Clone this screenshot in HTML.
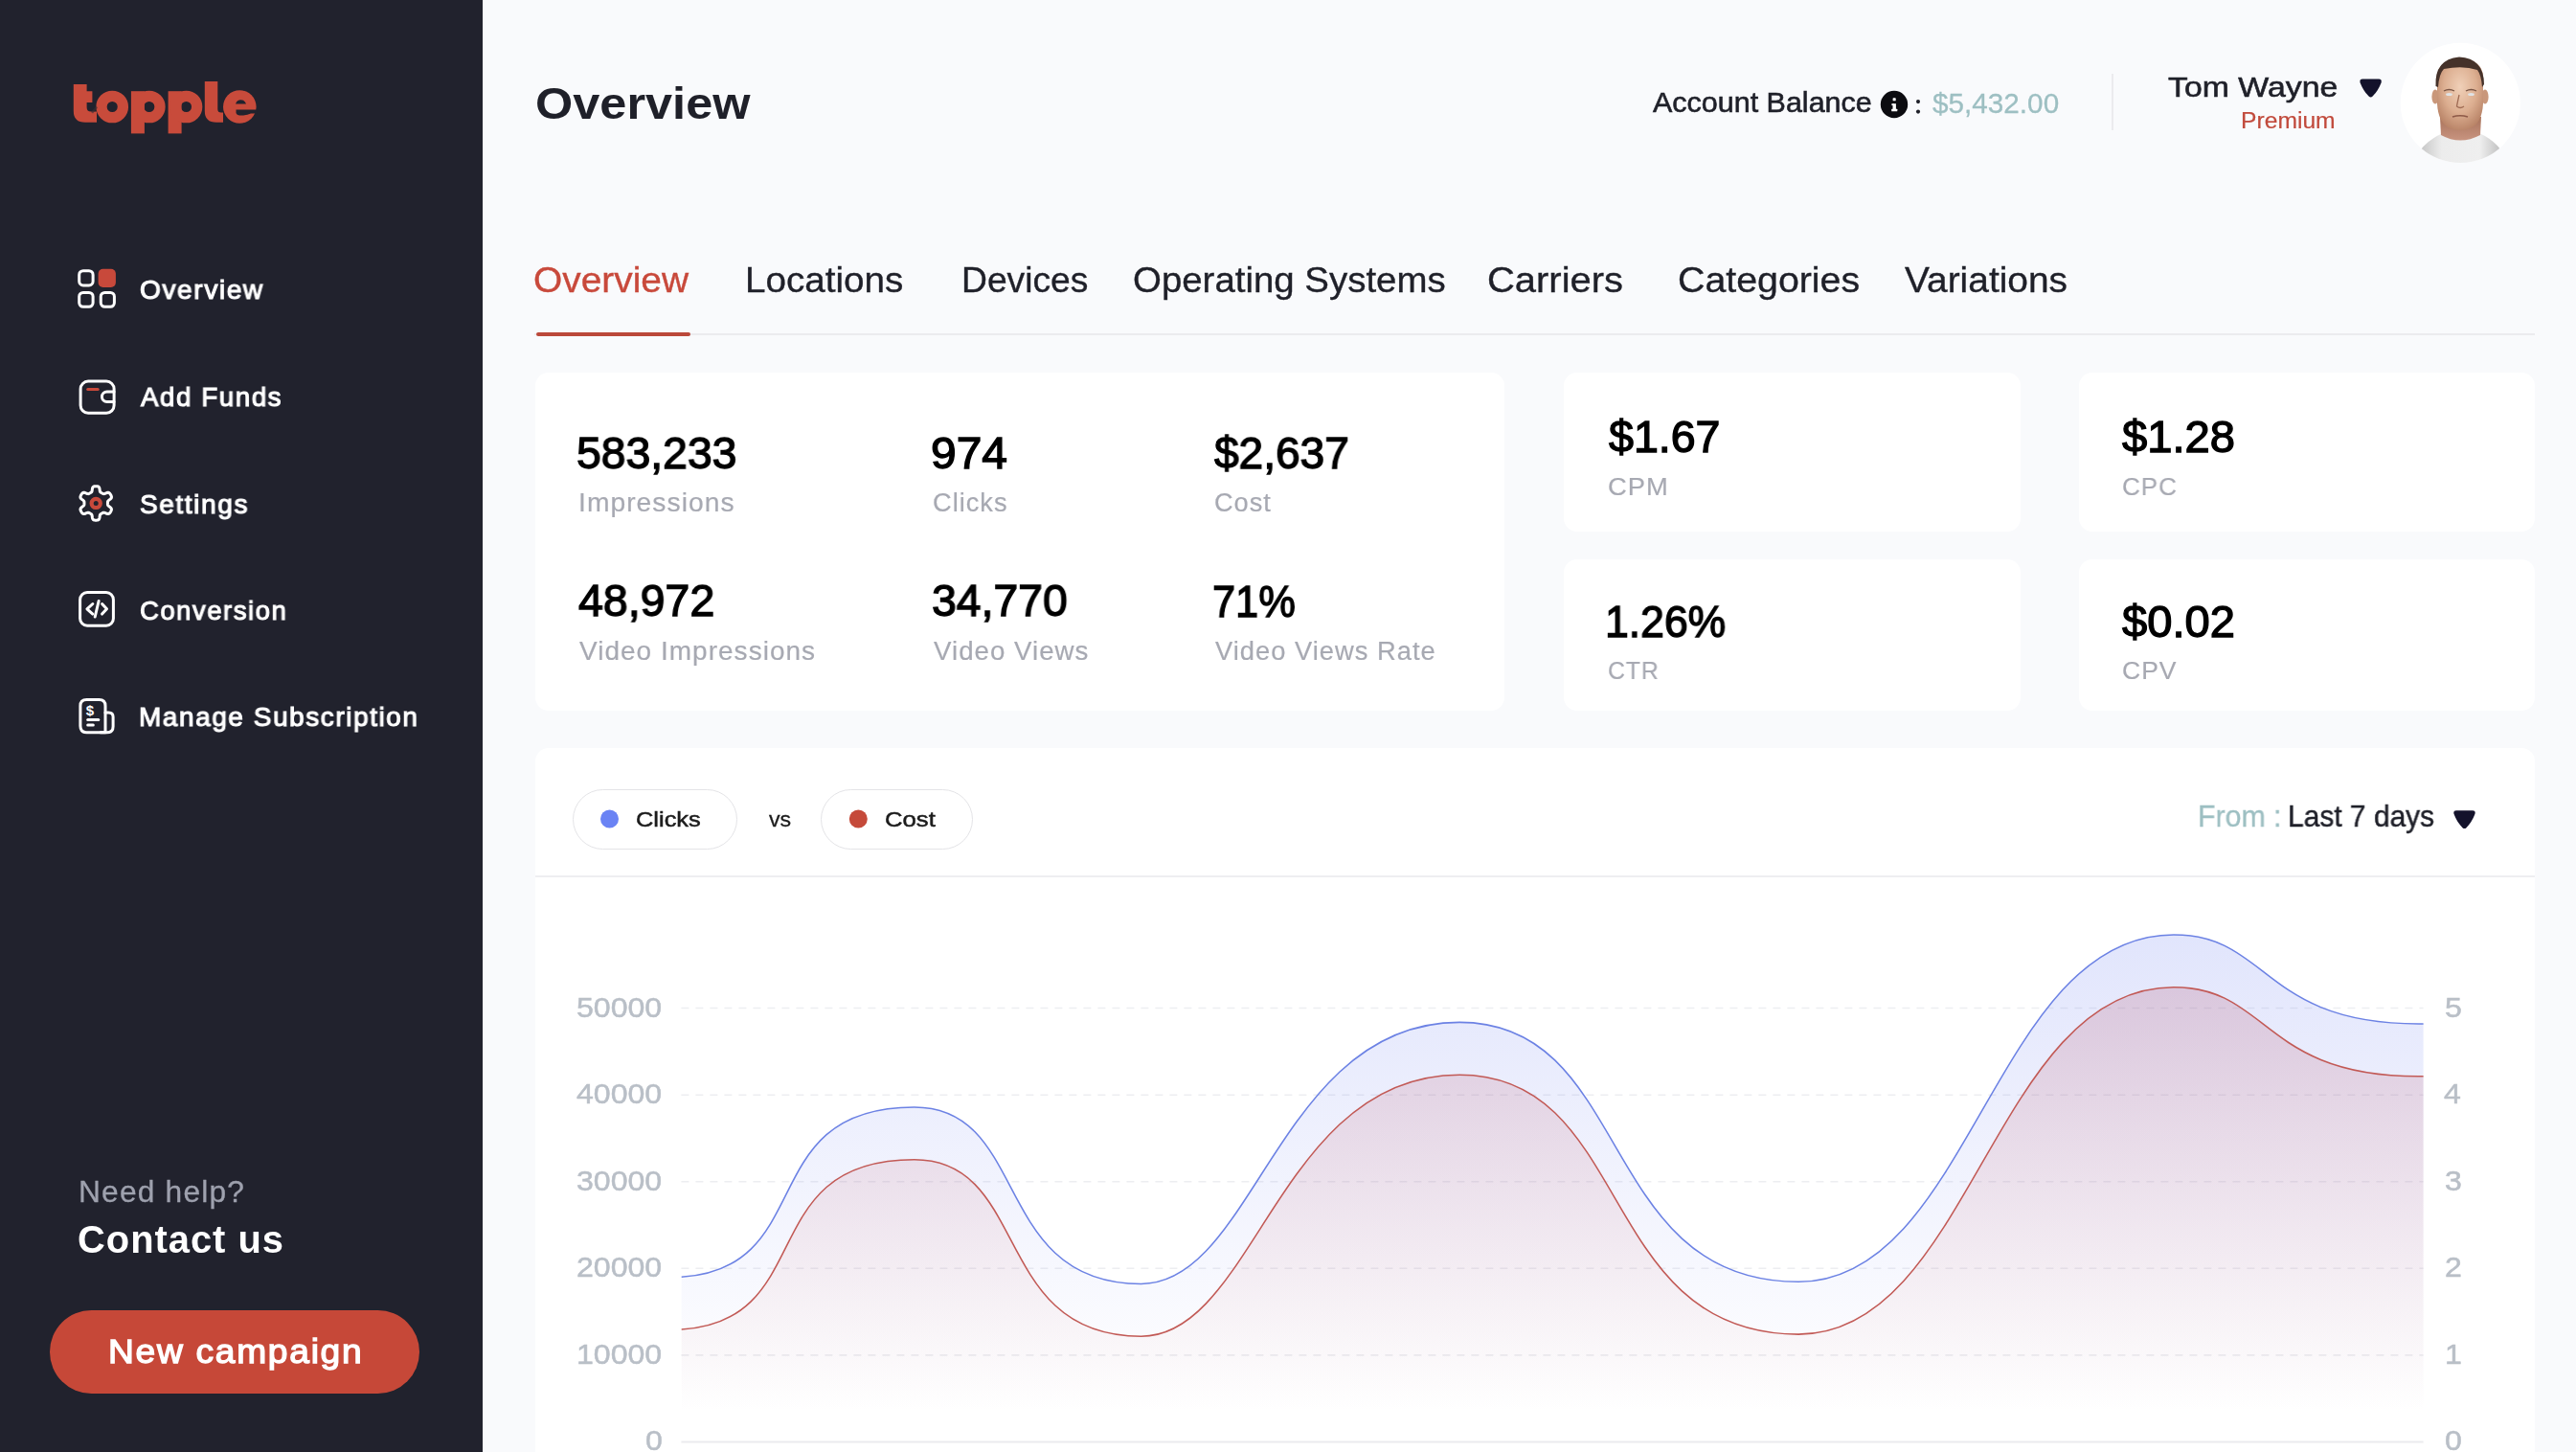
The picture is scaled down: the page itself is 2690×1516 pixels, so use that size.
<!DOCTYPE html>
<html><head><meta charset="utf-8"><title>topple - Overview</title>
<style>
html,body{margin:0;padding:0;}
body{width:2690px;height:1516px;overflow:hidden;position:relative;background:#f9fafc;font-family:"Liberation Sans",sans-serif;}
.t{position:absolute;white-space:pre;transform-origin:0 0;will-change:transform;font-family:"Liberation Sans",sans-serif;}
.box{position:absolute;}
#side{position:absolute;left:0;top:0;width:504px;height:1516px;background:#21222d;}
.card{position:absolute;background:#ffffff;border-radius:14px;}
.pill{position:absolute;background:#fff;border:1.5px solid #e4e4e7;border-radius:32px;box-sizing:border-box;}
svg{position:absolute;left:0;top:0;overflow:visible;}
</style></head>
<body>
<div id="side"></div>
<div class="box" style="left:51.6px;top:1367.5px;width:386.7px;height:87px;border-radius:44px;background:#c64838;"></div>

<!-- cards -->
<div class="card" style="left:558.5px;top:389px;width:1012.5px;height:353px;"></div>
<div class="card" style="left:1633px;top:389px;width:477px;height:166px;"></div>
<div class="card" style="left:2171px;top:389px;width:476px;height:166px;"></div>
<div class="card" style="left:1633px;top:584px;width:477px;height:158px;"></div>
<div class="card" style="left:2171px;top:584px;width:476px;height:158px;"></div>
<div class="card" style="left:558.6px;top:780.5px;width:2088.2px;height:800px;"></div>

<!-- tabs line -->
<div class="box" style="left:558px;top:348px;width:2089px;height:2px;background:#ebebee;"></div>
<div class="box" style="left:559.5px;top:347px;width:161.5px;height:4.4px;border-radius:3px;background:#bb483a;"></div>

<!-- header divider -->
<div class="box" style="left:2205px;top:77px;width:2px;height:59px;background:#ebebee;"></div>

<!-- pills -->
<div class="pill" style="left:597.6px;top:824px;width:172.8px;height:62.5px;"></div>
<div class="pill" style="left:857.4px;top:824px;width:159.1px;height:62.5px;"></div>
<!-- chart separator -->
<div class="box" style="left:558.6px;top:914px;width:2088.2px;height:2px;background:#eeeef1;"></div>

<svg width="2690" height="1516" viewBox="0 0 2690 1516">
  <defs>
    <linearGradient id="gb" x1="0" y1="975" x2="0" y2="1475" gradientUnits="userSpaceOnUse">
      <stop offset="0" stop-color="#6276f0" stop-opacity="0.19"/>
      <stop offset="0.45" stop-color="#6276f0" stop-opacity="0.10"/>
      <stop offset="0.8" stop-color="#6276f0" stop-opacity="0.035"/>
      <stop offset="1" stop-color="#6276f0" stop-opacity="0"/>
    </linearGradient>
    <linearGradient id="gr" x1="0" y1="1030" x2="0" y2="1475" gradientUnits="userSpaceOnUse">
      <stop offset="0" stop-color="#b04a66" stop-opacity="0.21"/>
      <stop offset="0.55" stop-color="#c4505c" stop-opacity="0.09"/>
      <stop offset="0.85" stop-color="#d05a50" stop-opacity="0.03"/>
      <stop offset="1" stop-color="#d05a50" stop-opacity="0"/>
    </linearGradient>
  </defs>

  <!-- logo -->
  <g fill="#c84b3b">
    <path d="M76.8,88 H90.6 V95.2 H96.4 V107 H90.6 V112 Q90.6,116.5 95,116.5 H101 V127.8 H89 Q76.8,127.8 76.8,116 Z"/>
    <circle cx="117.2" cy="111.5" r="11.2" fill="none" stroke="#c84b3b" stroke-width="11.3"/>
    <rect x="136.9" y="95.2" width="14" height="44.2"/>
    <circle cx="155.8" cy="111.5" r="11.2" fill="none" stroke="#c84b3b" stroke-width="11.3"/>
    <rect x="175.6" y="95.2" width="14" height="44.2"/>
    <circle cx="194.5" cy="111.5" r="11.2" fill="none" stroke="#c84b3b" stroke-width="11.3"/>
    <path d="M213.8,84.9 H227.3 V114 Q227.3,117.5 231,117.5 H233 V127.8 H226 Q213.8,127.8 213.8,116 Z"/>
    <circle cx="250.3" cy="111.5" r="17.3"/>
  </g>
  <g fill="#21222d">
    <path d="M246,108.4 Q247.5,104.2 251.5,104.2 Q255.5,104.2 257,108.4 Z"/>
    <path d="M246.5,114.6 H268.5 V118.6 H262 Q258,120.6 252,120.6 Q247.5,120.6 246.5,118 Z"/>
    <path d="M95,117 L100.5,110.5 L102,112.5 L97,118.5 Z" fill="#3a3033" opacity="0.6"/>
  </g>

  <!-- nav icons -->
  <g fill="none" stroke="#ffffff" stroke-width="3" stroke-linecap="round" stroke-linejoin="round">
    <rect x="82.7" y="282.7" width="14.4" height="15.3" rx="4.2"/>
    <rect x="82.7" y="305.4" width="14.4" height="14.9" rx="4.2"/>
    <rect x="105.25" y="305.4" width="14.15" height="14.9" rx="4.2"/>
    <rect x="84.1" y="398.1" width="35" height="33.1" rx="8"/>
    <path d="M119,409 H111.7 A5.25,5.25 0 0 0 111.7,419.5 H119"/>
    <path d="M112.45,525.40 112.45,524.97 112.45,524.54 112.47,524.11 112.54,523.67 112.75,523.19 113.24,522.63 114.14,521.93 115.23,521.09 116.05,520.25 116.42,519.50 116.46,518.83 116.34,518.22 116.13,517.63 115.87,517.07 115.57,516.52 115.25,516.00 114.89,515.49 114.49,515.02 114.02,514.60 113.42,514.31 112.59,514.25 111.45,514.54 110.18,515.07 109.12,515.49 108.39,515.64 107.87,515.58 107.45,515.42 107.07,515.22 106.70,515.01 106.33,514.79 105.95,514.58 105.58,514.36 105.22,514.13 104.87,513.84 104.56,513.42 104.32,512.72 104.16,511.59 103.98,510.23 103.67,509.10 103.20,508.41 102.64,508.03 102.05,507.83 101.44,507.72 100.82,507.67 100.20,507.65 99.58,507.67 98.96,507.72 98.35,507.83 97.76,508.03 97.20,508.41 96.73,509.10 96.42,510.23 96.24,511.59 96.08,512.72 95.84,513.42 95.53,513.84 95.18,514.13 94.82,514.36 94.45,514.58 94.08,514.79 93.70,515.01 93.33,515.22 92.95,515.42 92.53,515.58 92.01,515.64 91.28,515.49 90.22,515.07 88.95,514.54 87.81,514.25 86.98,514.31 86.38,514.60 85.91,515.02 85.51,515.49 85.15,516.00 84.83,516.52 84.53,517.07 84.27,517.63 84.06,518.22 83.94,518.83 83.98,519.50 84.35,520.25 85.17,521.09 86.26,521.93 87.16,522.63 87.65,523.19 87.86,523.67 87.93,524.11 87.95,524.54 87.95,524.97 87.95,525.40 87.95,525.83 87.95,526.26 87.93,526.69 87.86,527.13 87.65,527.61 87.16,528.17 86.26,528.87 85.17,529.71 84.35,530.55 83.98,531.30 83.94,531.97 84.06,532.58 84.27,533.17 84.53,533.73 84.83,534.27 85.15,534.80 85.51,535.31 85.91,535.78 86.38,536.20 86.98,536.49 87.81,536.55 88.95,536.26 90.22,535.73 91.28,535.31 92.01,535.16 92.53,535.22 92.95,535.38 93.33,535.58 93.70,535.79 94.08,536.01 94.45,536.22 94.82,536.44 95.18,536.67 95.53,536.96 95.84,537.38 96.08,538.08 96.24,539.21 96.42,540.57 96.73,541.70 97.20,542.39 97.76,542.77 98.35,542.97 98.96,543.08 99.58,543.13 100.20,543.15 100.82,543.13 101.44,543.08 102.05,542.97 102.64,542.77 103.20,542.39 103.67,541.70 103.98,540.57 104.16,539.21 104.32,538.08 104.56,537.38 104.87,536.96 105.22,536.67 105.58,536.44 105.95,536.22 106.33,536.01 106.70,535.79 107.07,535.58 107.45,535.38 107.87,535.22 108.39,535.16 109.12,535.31 110.18,535.73 111.45,536.26 112.59,536.55 113.42,536.49 114.02,536.20 114.49,535.78 114.89,535.31 115.25,534.80 115.57,534.27 115.87,533.73 116.13,533.17 116.34,532.58 116.46,531.97 116.42,531.30 116.05,530.55 115.23,529.71 114.14,528.87 113.24,528.17 112.75,527.61 112.54,527.13 112.47,526.69 112.45,526.26 112.45,525.83 112.45,525.40Z"/>
    <rect x="83.6" y="618.6" width="34.8" height="34.6" rx="7.5"/>
    <polyline points="96.8,630.5 90.9,635.8 96.8,641.1"/>
    <line x1="103.1" y1="627.5" x2="99.2" y2="644"/>
    <polyline points="106.6,630.5 111.5,635.8 106.6,641.1"/>
    <path d="M90.5,730.5 H103.5 Q110,730.5 110,737 V764.7 H90.5 Q83.9,764.7 83.9,758 V737 Q83.9,730.5 90.5,730.5 Z"/>
    <path d="M110,744 H113.5 Q118.1,744 118.1,748.5 V758.5 Q118.1,764.7 111.8,764.7 H105"/>
    <line x1="91.7" y1="751.4" x2="102.8" y2="751.4"/>
    <line x1="91.7" y1="757" x2="97.3" y2="757"/>
  </g>
  <rect x="102.6" y="280.7" width="18.3" height="19.2" rx="5" fill="#c8493b"/>
  <line x1="91.7" y1="406.5" x2="102.2" y2="406.5" stroke="#c8493b" stroke-width="3" stroke-linecap="round"/>
  <circle cx="100.2" cy="525.4" r="4.6" fill="none" stroke="#c8493b" stroke-width="4.2"/>
  <text x="94" y="747" font-family="Liberation Sans" font-weight="700" font-size="15" fill="#fff" text-anchor="middle">$</text>

  <!-- info icon -->
  <circle cx="1978" cy="109" r="14.2" fill="#0c0c10"/>
  <g fill="#ffffff">
    <rect x="1976.6" y="102.3" width="3.1" height="3" rx="0.6"/>
    <rect x="1976.5" y="108.2" width="3.4" height="6.2"/>
    <rect x="1975.2" y="113.8" width="6.1" height="2.5" rx="0.5"/>
    <rect x="1975.4" y="108.2" width="2.4" height="1.9"/>
  </g>
  <circle cx="2003" cy="106.1" r="2.05" fill="#1f2029"/>
  <circle cx="2003" cy="116.6" r="2.05" fill="#1f2029"/>

  <!-- dropdown triangles -->
  <path id="tri" d="M2467.2,82.6 H2484 Q2487.6,82.6 2486.6,86.2 Q2483.6,94.5 2477.6,100.6 Q2475.6,102.4 2473.6,100.6 Q2467.6,94.5 2464.6,86.2 Q2463.6,82.6 2467.2,82.6 Z" fill="#13122b"/>
  <path d="M2467.2,82.6 H2484 Q2487.6,82.6 2486.6,86.2 Q2483.6,94.5 2477.6,100.6 Q2475.6,102.4 2473.6,100.6 Q2467.6,94.5 2464.6,86.2 Q2463.6,82.6 2467.2,82.6 Z" fill="#13122b" transform="translate(97.9,763.6)"/>

  <!-- avatar -->
  <defs><clipPath id="av"><circle cx="2569.3" cy="107.4" r="62.6"/></clipPath>
    <radialGradient id="skin" cx="0.5" cy="0.4" r="0.65"><stop offset="0" stop-color="#f0d0b8"/><stop offset="0.55" stop-color="#dcae90"/><stop offset="1" stop-color="#b47e62"/></radialGradient>
    <linearGradient id="shirt" x1="0" y1="0" x2="1" y2="0"><stop offset="0" stop-color="#b9b9b9"/><stop offset="0.3" stop-color="#ececec"/><stop offset="0.7" stop-color="#efefef"/><stop offset="1" stop-color="#b0b0b0"/></linearGradient>
    <linearGradient id="neck" x1="0" y1="0" x2="0" y2="1"><stop offset="0" stop-color="#a8725a"/><stop offset="1" stop-color="#c89480"/></linearGradient>
  </defs>
  <circle cx="2569.3" cy="107.4" r="62.6" fill="#ffffff"/>
  <g clip-path="url(#av)">
    <path d="M2520,172 Q2526,150 2551,139 Q2569,149 2589,139 Q2613,150 2619,172 Z" fill="url(#shirt)"/>
    <path d="M2548,122 L2549,141 Q2569,152 2590,141 L2591,122 Z" fill="url(#neck)"/>
    <ellipse cx="2543" cy="101" rx="3.6" ry="7.5" fill="#c9977a"/>
    <ellipse cx="2595" cy="101" rx="3.6" ry="7.5" fill="#c9977a"/>
    <path d="M2545,80 Q2546,62 2569,61 Q2592,62 2593,80 L2593,108 Q2592,128 2580,134 Q2569,138 2558,134 Q2546,128 2545,108 Z" fill="url(#skin)"/>
    <path d="M2543.5,90 Q2542,62 2568,59.5 Q2594,61 2594,88 L2592,91 Q2591,78 2587,73 Q2572,68 2552,72 Q2547,77 2546,91 Z" fill="#45322a"/>
    <path d="M2552,95 Q2557.5,92 2563,95" stroke="#7a5646" stroke-width="1.4" fill="none"/>
    <path d="M2575,95 Q2580.5,92 2586,95" stroke="#7a5646" stroke-width="1.4" fill="none"/>
    <ellipse cx="2557.5" cy="98.6" rx="3.4" ry="1.5" fill="#dfe3e6"/>
    <ellipse cx="2580.5" cy="98.6" rx="3.4" ry="1.5" fill="#dfe3e6"/>
    <path d="M2568,99 Q2566,108 2565.5,111 Q2569,114 2573,111" stroke="#a06c54" stroke-width="1.3" fill="none"/>
    <path d="M2561,122 Q2569,119.5 2577,122" stroke="#8e5a48" stroke-width="1.6" fill="none"/>
  </g>

  <!-- chart grid -->
  <g stroke="#edeef1" stroke-width="1.6" stroke-dasharray="8 7">
    <line x1="711.4" y1="1052.5" x2="2530.6" y2="1052.5"/>
    <line x1="711.4" y1="1143.2" x2="2530.6" y2="1143.2"/>
    <line x1="711.4" y1="1233.8" x2="2530.6" y2="1233.8"/>
    <line x1="711.4" y1="1324.3" x2="2530.6" y2="1324.3"/>
    <line x1="711.4" y1="1414.9" x2="2530.6" y2="1414.9"/>
  </g>
  <line x1="711.4" y1="1505.6" x2="2530.6" y2="1505.6" stroke="#ebebee" stroke-width="2"/>
  <path d="M711.70,1333.26 C855.37,1324.07 786.12,1155.94 954.76,1155.94 C1075.95,1155.94 1035.17,1340.44 1191.56,1340.44 C1310.06,1340.44 1335.53,1067.36 1524.18,1067.36 C1705.77,1067.36 1667.54,1338.30 1878.04,1338.30 C2058.03,1338.30 2082.36,975.92 2269.90,975.92 C2370.70,975.92 2361.82,1070.81 2530.60,1068.93 L2530.6,1505.4 L711.7,1505.4 Z" fill="url(#gb)"/>
  <path d="M711.70,1388.06 C855.37,1378.87 786.12,1210.74 954.76,1210.74 C1075.95,1210.74 1035.17,1395.24 1191.56,1395.24 C1310.06,1395.24 1335.53,1122.16 1524.18,1122.16 C1705.77,1122.16 1667.54,1393.10 1878.04,1393.10 C2058.03,1393.10 2082.36,1030.72 2269.90,1030.72 C2370.70,1030.72 2361.82,1125.61 2530.60,1123.73 L2530.6,1505.4 L711.7,1505.4 Z" fill="url(#gr)"/>
  <path d="M711.70,1333.26 C855.37,1324.07 786.12,1155.94 954.76,1155.94 C1075.95,1155.94 1035.17,1340.44 1191.56,1340.44 C1310.06,1340.44 1335.53,1067.36 1524.18,1067.36 C1705.77,1067.36 1667.54,1338.30 1878.04,1338.30 C2058.03,1338.30 2082.36,975.92 2269.90,975.92 C2370.70,975.92 2361.82,1070.81 2530.60,1068.93" fill="none" stroke="#6c82e4" stroke-width="1.55"/>
  <path d="M711.70,1388.06 C855.37,1378.87 786.12,1210.74 954.76,1210.74 C1075.95,1210.74 1035.17,1395.24 1191.56,1395.24 C1310.06,1395.24 1335.53,1122.16 1524.18,1122.16 C1705.77,1122.16 1667.54,1393.10 1878.04,1393.10 C2058.03,1393.10 2082.36,1030.72 2269.90,1030.72 C2370.70,1030.72 2361.82,1125.61 2530.60,1123.73" fill="none" stroke="#c25a56" stroke-width="1.55"/>

  <!-- legend dots -->
  <circle cx="636.5" cy="855" r="9.5" fill="#6a83f4"/>
  <circle cx="896.3" cy="855" r="9.5" fill="#c54a3a"/>
</svg>

<div class="t" style="left:146.21px;top:288.00px;font-size:28.49px;line-height:28.49px;font-weight:400;color:#ffffff;transform:scaleX(0.9868);-webkit-text-stroke:1.1px #ffffff;letter-spacing:1.6px;">Overview</div>
<div class="t" style="left:146.90px;top:400.00px;font-size:28.49px;line-height:28.49px;font-weight:400;color:#ffffff;transform:scaleX(0.9733);-webkit-text-stroke:1.1px #ffffff;letter-spacing:1.6px;">Add Funds</div>
<div class="t" style="left:145.92px;top:512.00px;font-size:28.49px;line-height:28.49px;font-weight:400;color:#ffffff;transform:scaleX(0.9850);-webkit-text-stroke:1.1px #ffffff;letter-spacing:1.6px;">Settings</div>
<div class="t" style="left:146.04px;top:623.00px;font-size:28.49px;line-height:28.49px;font-weight:400;color:#ffffff;transform:scaleX(0.9635);-webkit-text-stroke:1.1px #ffffff;letter-spacing:1.6px;">Conversion</div>
<div class="t" style="left:145.04px;top:734.00px;font-size:28.49px;line-height:28.49px;font-weight:400;color:#ffffff;transform:scaleX(0.9816);-webkit-text-stroke:1.1px #ffffff;letter-spacing:1.6px;">Manage Subscription</div>
<div class="t" style="left:81.90px;top:1229.00px;font-size:31.69px;line-height:31.69px;font-weight:400;color:#9ea1ae;transform:scaleX(1.0000);-webkit-text-stroke:0.3px #9ea1ae;letter-spacing:1.2px;">Need help?</div>
<div class="t" style="left:81.00px;top:1275.00px;font-size:39.83px;line-height:39.83px;font-weight:700;color:#ffffff;transform:scaleX(1.0009);letter-spacing:1.0px;">Contact us</div>
<div class="t" style="left:112.63px;top:1394.00px;font-size:34.3px;line-height:34.3px;font-weight:400;color:#ffffff;transform:scaleX(1.0826);-webkit-text-stroke:1.3px #ffffff;letter-spacing:1.6px;">New campaign</div>
<div class="t" style="left:558.53px;top:85.00px;font-size:46.51px;line-height:46.51px;font-weight:700;color:#1f2029;transform:scaleX(1.0854);">Overview</div>
<div class="t" style="left:1726.00px;top:91.00px;font-size:30.38px;line-height:30.38px;font-weight:400;color:#1f2029;transform:scaleX(1.0033);-webkit-text-stroke:0.6px #1f2029;">Account Balance</div>
<div class="t" style="left:2018.00px;top:93.00px;font-size:29.65px;line-height:29.65px;font-weight:400;color:#9dbfc2;transform:scaleX(1.0023);-webkit-text-stroke:0.3px #9dbfc2;">$5,432.00</div>
<div class="t" style="left:2264.00px;top:76.00px;font-size:30.23px;line-height:30.23px;font-weight:400;color:#1f2029;transform:scaleX(1.1191);-webkit-text-stroke:0.6px #1f2029;">Tom Wayne</div>
<div class="t" style="left:2339.54px;top:114.00px;font-size:23.98px;line-height:23.98px;font-weight:400;color:#c14a3c;transform:scaleX(1.0290);-webkit-text-stroke:0.2px #c14a3c;">Premium</div>
<div class="t" style="left:556.69px;top:275.00px;font-size:36.77px;line-height:36.77px;font-weight:400;color:#c8493b;transform:scaleX(1.0572);-webkit-text-stroke:0.35px #c8493b;">Overview</div>
<div class="t" style="left:778.45px;top:275.00px;font-size:36.77px;line-height:36.77px;font-weight:400;color:#1f2029;transform:scaleX(1.0503);-webkit-text-stroke:0.35px #1f2029;">Locations</div>
<div class="t" style="left:1004.36px;top:275.00px;font-size:36.77px;line-height:36.77px;font-weight:400;color:#1f2029;transform:scaleX(1.0126);-webkit-text-stroke:0.35px #1f2029;">Devices</div>
<div class="t" style="left:1182.61px;top:275.00px;font-size:36.77px;line-height:36.77px;font-weight:400;color:#1f2029;transform:scaleX(1.0448);-webkit-text-stroke:0.35px #1f2029;">Operating Systems</div>
<div class="t" style="left:1552.83px;top:275.00px;font-size:36.77px;line-height:36.77px;font-weight:400;color:#1f2029;transform:scaleX(1.0859);-webkit-text-stroke:0.35px #1f2029;">Carriers</div>
<div class="t" style="left:1751.56px;top:275.00px;font-size:36.77px;line-height:36.77px;font-weight:400;color:#1f2029;transform:scaleX(1.0691);-webkit-text-stroke:0.35px #1f2029;">Categories</div>
<div class="t" style="left:1988.60px;top:275.00px;font-size:36.77px;line-height:36.77px;font-weight:400;color:#1f2029;transform:scaleX(1.0575);-webkit-text-stroke:0.35px #1f2029;">Variations</div>
<div class="t" style="left:602.11px;top:450.00px;font-size:46.95px;line-height:46.95px;font-weight:400;color:#000000;transform:scaleX(0.9868);-webkit-text-stroke:1.35px #000000;">583,233</div>
<div class="t" style="left:971.96px;top:450.00px;font-size:46.95px;line-height:46.95px;font-weight:400;color:#000000;transform:scaleX(1.0211);-webkit-text-stroke:1.35px #000000;">974</div>
<div class="t" style="left:1267.90px;top:450.00px;font-size:46.95px;line-height:46.95px;font-weight:400;color:#000000;transform:scaleX(0.9810);-webkit-text-stroke:1.35px #000000;">$2,637</div>
<div class="t" style="left:604.10px;top:604.00px;font-size:46.95px;line-height:46.95px;font-weight:400;color:#000000;transform:scaleX(0.9908);-webkit-text-stroke:1.35px #000000;">48,972</div>
<div class="t" style="left:972.71px;top:604.00px;font-size:46.95px;line-height:46.95px;font-weight:400;color:#000000;transform:scaleX(0.9873);-webkit-text-stroke:1.35px #000000;">34,770</div>
<div class="t" style="left:1266.05px;top:605.00px;font-size:46.95px;line-height:46.95px;font-weight:400;color:#000000;transform:scaleX(0.9242);-webkit-text-stroke:1.35px #000000;">71%</div>
<div class="t" style="left:603.92px;top:511.00px;font-size:27.18px;line-height:27.18px;font-weight:400;color:#a7a9b2;transform:scaleX(1.0390);-webkit-text-stroke:0.2px #a7a9b2;letter-spacing:1.0px;">Impressions</div>
<div class="t" style="left:973.60px;top:511.00px;font-size:27.18px;line-height:27.18px;font-weight:400;color:#a7a9b2;transform:scaleX(1.0013);-webkit-text-stroke:0.2px #a7a9b2;letter-spacing:1.0px;">Clicks</div>
<div class="t" style="left:1267.80px;top:511.00px;font-size:27.18px;line-height:27.18px;font-weight:400;color:#a7a9b2;transform:scaleX(0.9966);-webkit-text-stroke:0.2px #a7a9b2;letter-spacing:1.0px;">Cost</div>
<div class="t" style="left:604.80px;top:666.00px;font-size:27.18px;line-height:27.18px;font-weight:400;color:#a7a9b2;transform:scaleX(1.0294);-webkit-text-stroke:0.2px #a7a9b2;letter-spacing:1.0px;">Video Impressions</div>
<div class="t" style="left:974.80px;top:666.00px;font-size:27.18px;line-height:27.18px;font-weight:400;color:#a7a9b2;transform:scaleX(1.0184);-webkit-text-stroke:0.2px #a7a9b2;letter-spacing:1.0px;">Video Views</div>
<div class="t" style="left:1268.80px;top:666.00px;font-size:27.18px;line-height:27.18px;font-weight:400;color:#a7a9b2;transform:scaleX(1.0053);-webkit-text-stroke:0.2px #a7a9b2;letter-spacing:1.0px;">Video Views Rate</div>
<div class="t" style="left:1679.60px;top:433.00px;font-size:46.51px;line-height:46.51px;font-weight:400;color:#000000;transform:scaleX(1.0009);-webkit-text-stroke:1.35px #000000;">$1.67</div>
<div class="t" style="left:2215.50px;top:433.00px;font-size:46.51px;line-height:46.51px;font-weight:400;color:#000000;transform:scaleX(1.0139);-webkit-text-stroke:1.35px #000000;">$1.28</div>
<div class="t" style="left:1676.13px;top:626.00px;font-size:46.51px;line-height:46.51px;font-weight:400;color:#000000;transform:scaleX(0.9570);-webkit-text-stroke:1.35px #000000;">1.26%</div>
<div class="t" style="left:2215.50px;top:626.00px;font-size:46.51px;line-height:46.51px;font-weight:400;color:#000000;transform:scaleX(1.0130);-webkit-text-stroke:1.35px #000000;">$0.02</div>
<div class="t" style="left:1678.57px;top:495.00px;font-size:26.45px;line-height:26.45px;font-weight:400;color:#a7a9b2;transform:scaleX(1.0328);-webkit-text-stroke:0.2px #a7a9b2;letter-spacing:1.0px;">CPM</div>
<div class="t" style="left:2215.82px;top:495.00px;font-size:26.45px;line-height:26.45px;font-weight:400;color:#a7a9b2;transform:scaleX(0.9839);-webkit-text-stroke:0.2px #a7a9b2;letter-spacing:1.0px;">CPC</div>
<div class="t" style="left:1678.66px;top:687.00px;font-size:26.45px;line-height:26.45px;font-weight:400;color:#a7a9b2;transform:scaleX(0.9370);-webkit-text-stroke:0.2px #a7a9b2;letter-spacing:1.0px;">CTR</div>
<div class="t" style="left:2215.80px;top:687.00px;font-size:26.45px;line-height:26.45px;font-weight:400;color:#a7a9b2;transform:scaleX(1.0018);-webkit-text-stroke:0.2px #a7a9b2;letter-spacing:1.0px;">CPV</div>
<div class="t" style="left:663.86px;top:845.00px;font-size:22.24px;line-height:22.24px;font-weight:400;color:#1c1c1c;transform:scaleX(1.1431);-webkit-text-stroke:0.5px #1c1c1c;">Clicks</div>
<div class="t" style="left:803.00px;top:845.00px;font-size:22.24px;line-height:22.24px;font-weight:400;color:#1c1c1c;transform:scaleX(1.0409);-webkit-text-stroke:0.3px #1c1c1c;">vs</div>
<div class="t" style="left:923.84px;top:845.00px;font-size:22.24px;line-height:22.24px;font-weight:400;color:#1c1c1c;transform:scaleX(1.1556);-webkit-text-stroke:0.5px #1c1c1c;">Cost</div>
<div class="t" style="left:2294.64px;top:838.00px;font-size:30.96px;line-height:30.96px;font-weight:400;color:#9dbfc2;transform:scaleX(0.9788);-webkit-text-stroke:0.3px #9dbfc2;">From :</div>
<div class="t" style="left:2388.67px;top:838.00px;font-size:30.96px;line-height:30.96px;font-weight:400;color:#1f2029;transform:scaleX(0.9671);-webkit-text-stroke:0.45px #1f2029;">Last 7 days</div>
<div class="t" style="left:602.30px;top:1038.00px;font-size:29.07px;line-height:29.07px;font-weight:400;color:#b9bfc7;transform:scaleX(1.1038);-webkit-text-stroke:0.5px #b9bfc7;">50000</div>
<div class="t" style="left:2552.84px;top:1038.00px;font-size:29.07px;line-height:29.07px;font-weight:400;color:#b9bfc7;transform:scaleX(1.1038);-webkit-text-stroke:0.5px #b9bfc7;">5</div>
<div class="t" style="left:602.30px;top:1128.00px;font-size:29.07px;line-height:29.07px;font-weight:400;color:#b9bfc7;transform:scaleX(1.1038);-webkit-text-stroke:0.5px #b9bfc7;">40000</div>
<div class="t" style="left:2551.74px;top:1128.00px;font-size:29.07px;line-height:29.07px;font-weight:400;color:#b9bfc7;transform:scaleX(1.1038);-webkit-text-stroke:0.5px #b9bfc7;">4</div>
<div class="t" style="left:602.30px;top:1219.00px;font-size:29.07px;line-height:29.07px;font-weight:400;color:#b9bfc7;transform:scaleX(1.1038);-webkit-text-stroke:0.5px #b9bfc7;">30000</div>
<div class="t" style="left:2552.84px;top:1219.00px;font-size:29.07px;line-height:29.07px;font-weight:400;color:#b9bfc7;transform:scaleX(1.1038);-webkit-text-stroke:0.5px #b9bfc7;">3</div>
<div class="t" style="left:602.30px;top:1309.00px;font-size:29.07px;line-height:29.07px;font-weight:400;color:#b9bfc7;transform:scaleX(1.1038);-webkit-text-stroke:0.5px #b9bfc7;">20000</div>
<div class="t" style="left:2552.84px;top:1309.00px;font-size:29.07px;line-height:29.07px;font-weight:400;color:#b9bfc7;transform:scaleX(1.1038);-webkit-text-stroke:0.5px #b9bfc7;">2</div>
<div class="t" style="left:602.30px;top:1400.00px;font-size:29.07px;line-height:29.07px;font-weight:400;color:#b9bfc7;transform:scaleX(1.1038);-webkit-text-stroke:0.5px #b9bfc7;">10000</div>
<div class="t" style="left:2552.84px;top:1400.00px;font-size:29.07px;line-height:29.07px;font-weight:400;color:#b9bfc7;transform:scaleX(1.1038);-webkit-text-stroke:0.5px #b9bfc7;">1</div>
<div class="t" style="left:674.04px;top:1490.00px;font-size:29.07px;line-height:29.07px;font-weight:400;color:#b9bfc7;transform:scaleX(1.1038);-webkit-text-stroke:0.5px #b9bfc7;">0</div>
<div class="t" style="left:2552.84px;top:1490.00px;font-size:29.07px;line-height:29.07px;font-weight:400;color:#b9bfc7;transform:scaleX(1.1038);-webkit-text-stroke:0.5px #b9bfc7;">0</div>
</body></html>
